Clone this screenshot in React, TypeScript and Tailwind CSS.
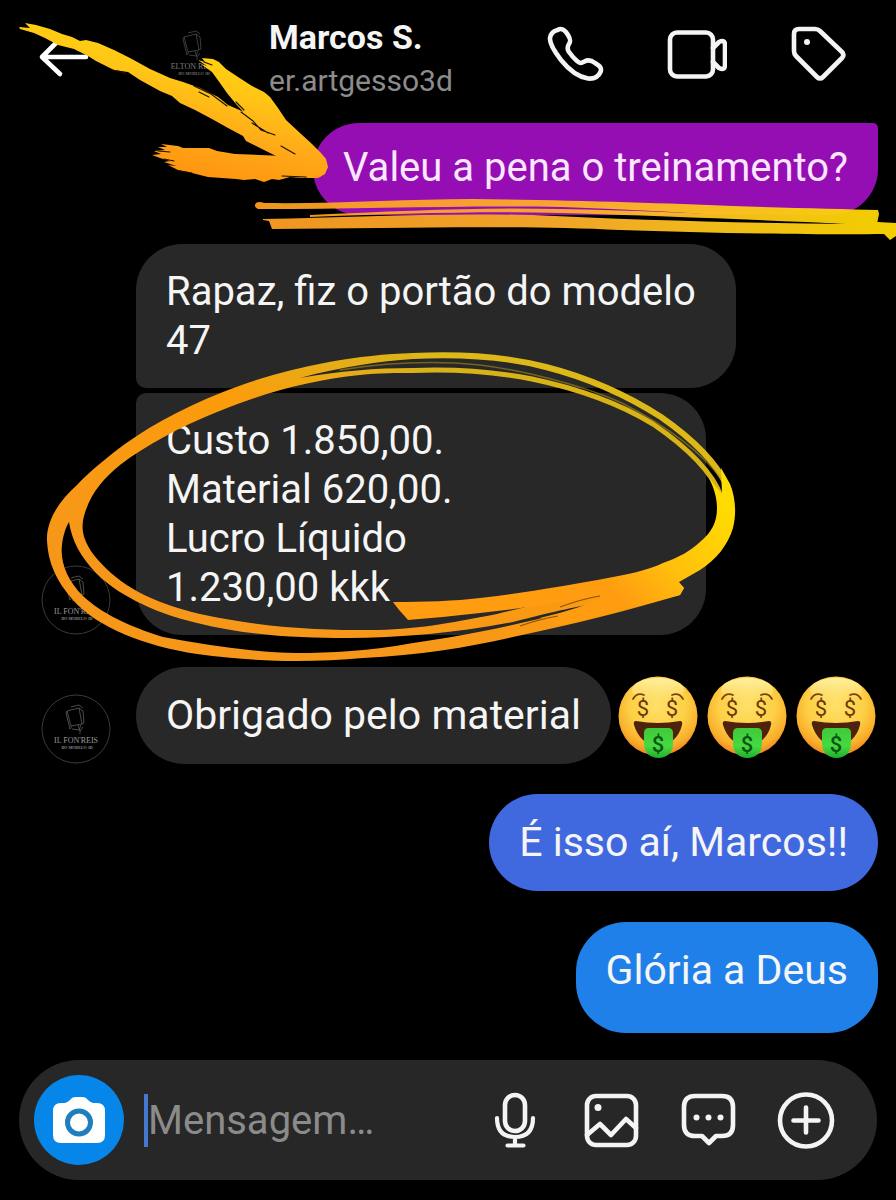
import { useId } from "react";
import type { ReactNode } from "react";

interface BrandMarkProps {
  title: string;
  subtitle: string;
  ring?: boolean;
}

function BrandMark({ title, subtitle, ring = false }: BrandMarkProps) {
  return (
    <svg viewBox="0 0 70 70" className="h-[70px] w-[70px] shrink-0" fill="none">
      {ring && <circle cx="35" cy="35" r="34" stroke="#3a3a3a" strokeWidth="1" />}
      <g stroke="#5e5e5e" strokeWidth="0.8" strokeLinejoin="round">
        <path d="M26 17l12-3 3 16-11 2zM26 17l-1 2 4 16 2-3M38 14l4 3 1 12-2 1M30 13l8-2 4 3" />
        <path d="M31 35l7 1 2-5M37 31l2 6 3-4M39 37v3" />
      </g>
      <text
        x="35"
        y="49"
        textAnchor="middle"
        fill="#9a9a9a"
        className="font-['Liberation_Serif',serif] text-[8px]"
      >
        {title}
      </text>
      <text
        x="36"
        y="55"
        textAnchor="middle"
        fill="#8a8a8a"
        className="font-['Liberation_Serif',serif] text-[4px] font-bold"
      >
        {subtitle}
      </text>
    </svg>
  );
}

function MoneyFace() {
  const id = useId();

  return (
    <svg viewBox="0 0 80 84" className="h-[84px] w-20 shrink-0" role="img" aria-label="money-mouth face">
      <defs>
        <radialGradient id={`${id}face`} cx="0.5" cy="0.36" r="0.66">
          <stop offset="0" stopColor="#ffe069" />
          <stop offset="0.55" stopColor="#fdcf44" />
          <stop offset="0.82" stopColor="#f9ae2b" />
          <stop offset="1" stopColor="#ee7d1e" />
        </radialGradient>
        <linearGradient id={`${id}shine`} x1="0" y1="0" x2="0" y2="1">
          <stop offset="0" stopColor="#fff3a8" stopOpacity="0.9" />
          <stop offset="1" stopColor="#fff3a8" stopOpacity="0" />
        </linearGradient>
        <linearGradient id={`${id}note`} x1="0" y1="0" x2="0" y2="1">
          <stop offset="0" stopColor="#3fc93a" />
          <stop offset="0.6" stopColor="#46da41" />
          <stop offset="1" stopColor="#1fae2b" />
        </linearGradient>
      </defs>
      <circle cx="40" cy="42" r="39.5" fill={`url(#${id}face)`} />
      <ellipse cx="40" cy="16" rx="26" ry="12" fill={`url(#${id}shine)`} />
      <g stroke="#7a4310" strokeWidth="1.8" strokeLinecap="round" fill="none">
        <path d="M15 25q4-7 11-4" />
        <path d="M54 21q7-3 11 4" />
      </g>
      <g fill="#6b380a" className="font-[Roboto,sans-serif] text-[22px]" textAnchor="middle">
        <text x="25" y="42">$</text>
        <text x="54" y="42">$</text>
      </g>
      <path d="M18 47q22 4 44 0q3 0 2 4c-3 13-12 20-24 20s-20-7-24-20q-1-4 2-4z" fill="#4f230b" />
      <path d="M26 63V59q0-5 5-5h19q5 0 5 5v11c0 9-7 14-14.500 14S26 79 26 70z" fill={`url(#${id}note)`} />
      <text
        x="40"
        y="78"
        textAnchor="middle"
        fill="#0d5417"
        className="font-[Roboto,sans-serif] text-[22px] font-medium"
      >
        $
      </text>
    </svg>
  );
}

interface BubbleProps {
  className: string;
  children: ReactNode;
}

function Bubble({ className, children }: BubbleProps) {
  return <p className={`px-[30px] leading-[49px] ${className}`}>{children}</p>;
}

function IconButton({ label, children }: { label: string; children: ReactNode }) {
  return (
    <button type="button" aria-label={label} className="shrink-0">
      <svg
        viewBox="0 0 60 60"
        className="h-[60px] w-[60px]"
        fill="none"
        stroke="#f4f4f4"
        strokeWidth="4.6"
        strokeLinecap="round"
        strokeLinejoin="round"
      >
        {children}
      </svg>
    </button>
  );
}

// Hand-drawn marker strokes on top of the conversation
function MarkerStrokes() {
  return (
    <svg
      viewBox="0 0 896 1200"
      preserveAspectRatio="xMinYMin meet"
      className="pointer-events-none absolute top-0 left-0 w-full"
      aria-hidden="true"
    >
      <defs>
        <linearGradient id="arrowInk" gradientUnits="userSpaceOnUse" x1="262" y1="50" x2="232" y2="180">
          <stop offset="0" stopColor="#ffd60a" />
          <stop offset="0.35" stopColor="#ffc616" />
          <stop offset="0.7" stopColor="#ffa918" />
          <stop offset="1" stopColor="#ff9710" />
        </linearGradient>
        <linearGradient id="lineInk" gradientUnits="userSpaceOnUse" x1="256" y1="0" x2="896" y2="0">
          <stop offset="0" stopColor="#fb9f22" />
          <stop offset="0.45" stopColor="#fdab2c" />
          <stop offset="0.75" stopColor="#fdc91a" />
          <stop offset="1" stopColor="#ffd900" />
        </linearGradient>
        <linearGradient id="loopInk" gradientUnits="userSpaceOnUse" x1="430" y1="352" x2="330" y2="640">
          <stop offset="0" stopColor="#d9b516" />
          <stop offset="0.15" stopColor="#e6ad16" />
          <stop offset="0.35" stopColor="#fb9c0c" />
          <stop offset="1" stopColor="#f7971a" />
        </linearGradient>
        <linearGradient id="tailInk" gradientUnits="userSpaceOnUse" x1="720" y1="500" x2="620" y2="600">
          <stop offset="0" stopColor="#ffdc00" />
          <stop offset="0.55" stopColor="#ffc10c" />
          <stop offset="1" stopColor="#ff9c10" />
        </linearGradient>
      </defs>

      <g fill="url(#arrowInk)">
        <path d="M19 27L30 28L25 23L36 25L50 29L62 34L72 37L80 41L86 40L98 43L114 50L130 58L150 69L170 78L183 82L200 88L218 97L228 105L244 112L258 124L272 134L283 141L300 156L290 176L276 156L262 149L246 141L243 136L228 128L212 119L195 110L180 103L172 96L160 91L140 80L128 72L114 70L96 61L88 56L74 49L58 45L45 38L34 33L20 29Z" />
        <path d="M198 60L205 62L202 58L213 59L219 62L226 69L238 77L252 86L264 92L270 97L278 108L286 120L300 133L312 144L321 153L326 159L328 167L325 174L318 178L308 178L290 165L276 147L262 130L248 117L236 104L227 93L220 83L212 72L205 67L201 64L207 66Z" />
        <path d="M152 155L161 154L154 151L165 150L158 147L167 147L161 144L178 146L183 148L209 148L217 151L235 154L260 155L284 156L306 148L324 160L326 171L320 177L302 178L290 177L279 180L272 179L264 182L255 179L244 180L236 179L222 178L208 177L196 174L188 172L178 170L168 165L176 166L164 162L170 161L160 158Z" />
      </g>
      <g stroke="#1a1200" strokeWidth="1.1" strokeLinecap="round" fill="none">
        <path d="M194 86l17 8 16 12M199 92l10 5M241 112l12 9 8 9 14 5M236 102l8 8M252 123l16 10M281 146l14 8M158 151l12 1M164 159l10 2M204 62l8 3M282 176l24 1M180 171l12 2M112 70l14 3M118 71l8 3" />
      </g>

      <g fill="url(#lineInk)" opacity="0.95">
        <path d="M256 203q3-2 8 0c76 1 140-4 208-4 90 1 190 4 260 7 60 2 110 3 146 4l1 4-2 10h-30c-80-6-190-14-285-17-90-2-200 2-304 2q-5-2-2-6z" />
        <path d="M310 215c90-4 170-8 250-6 100 2 200 7 290 11v4c-96-4-180-8-290-11-80-2-170 1-250 4z" />
        <path d="M263 219c90-2 170-6 270-4 100 5 210 8 318 9l8-3 37 2v13l-6 4-6-6c-60 1-180-1-264-4-100-5-220-2-348-1l-3-8-6-1z" />
      </g>

      <g fill="none" strokeLinecap="round">
        <path
          d="M727 486C716 462 694 440 661 417C622 392 585 377 546 367C500 355 455 354 413 356"
          stroke="#dcb818"
          strokeWidth="6"
        />
        <path
          d="M721 496C712 472 688 448 653 424C620 404 580 389 532 379C490 371 450 369 413 370.500"
          stroke="#d8b318"
          strokeWidth="5"
        />
        <path
          d="M722 480C702 452 670 428 622 403C580 384 520 370 480 365C440 361 390 362 340 370"
          stroke="#a98a12"
          strokeWidth="1.5"
          opacity="0.6"
        />
      </g>
      <path
        fill="url(#loopInk)"
        d="M413 353C345 355 275 371 223 392C180 409 142 430 113 453C98 465 86 475 77 485C60 500 46 520 47 541C48 562 56 581 73 600C98 628 145 646 197 654C262 663 315 662 363 658C420 655 470 647 513 637C575 624 630 610 680 595L684 588L674 578C620 588 560 598 497 614C450 623 415 630 370 630C320 630 265 628 200 614C150 602 120 585 98 560C84 544 80 530 84 516C90 494 103 479 120 465C146 445 180 427 217 412C260 394 310 380 360 375C380 373 396 373 413 373L413 368C375 368 340 371 300 378C340 367 380 361 413 359zM69 522C72 541 80 556 97 574C115 592 150 612 197 623C250 636 300 638 347 638C400 638 455 633 513 622C555 611 580 606 602 602C550 617 490 632 413 643C370 651 330 653 297 653C250 652 205 645 163 637C125 625 100 612 83 596C67 580 60 562 62 545C63 535 66 527 69 522z"
        fillRule="evenodd"
      />
      <path
        fill="url(#tailInk)"
        d="M393 602C425 602 455 601 480 598C530 592 570 585 613 577C635 573 650 569 663 563C680 557 690 551 700 542C712 532 717 522 717 508C717 498 714 488 709 478L722 494L721 468L730 484C735 496 737 512 733 528C728 545 716 560 700 570L679 582L684 588L680 595C640 606 600 616 560 625L540 618C570 611 590 604 602 596C560 602 520 609 480 613C455 616 430 618 408 620C402 613 397 608 393 602z"
      />
      <path d="M560 607q22-8 40-11M520 626q20-7 38-10" stroke="#8a5208" strokeWidth="1.2" fill="none" />
    </svg>
  );
}

export default function App() {
  return (
    <div className="relative flex min-h-screen flex-col overflow-hidden bg-black font-[Roboto,sans-serif] text-[#f5f5f5]">
      <header className="flex h-[123px] items-start pr-[47px] pl-8">
        <button type="button" aria-label="Voltar" className="mt-[26px] shrink-0">
          <svg
            viewBox="0 0 60 60"
            className="h-[60px] w-[60px]"
            fill="none"
            stroke="#fff"
            strokeWidth="4.6"
            strokeLinecap="round"
            strokeLinejoin="round"
          >
            <path d="M28 13L10 31l18 17M10 31h44" />
          </svg>
        </button>
        <div className="mt-5 ml-[66px] shrink-0 opacity-80">
          <BrandMark title="ELTON REIS" subtitle="DO MODELO 3D" />
        </div>
        <div className="ml-[41px] min-w-0 flex-1 pt-4">
          <h1 className="text-[34px] leading-[43px] font-bold">Marcos S.</h1>
          <p className="text-[30px] leading-[43px] text-[#8c8c8c]">er.artgesso3d</p>
        </div>
        <div className="mt-6 flex gap-[62px]">
          <IconButton label="Ligar">
            <path d="M12.5 6C17 3.500 20 6 23 11C25.500 15 26 17 24 20C22 23 22 25 24 28C26.500 31.500 28.500 34 32 37C35 39.500 36 39.500 39.500 37.500C43 35.500 46 36 50 39C55 42 57 44 55.500 48C53.500 52.500 49 55 43 54.500C34 53 24 46 16 36C9 27 4.500 19 5 14C5.500 10 8.500 7 12.500 6Z" />
          </IconButton>
          <IconButton label="Chamada de vídeo">
            <rect x="3" y="8.500" width="43" height="44" rx="7" />
            <path d="M46 24l6-6q6-3 6 3v20q0 6-6 3l-6-6" />
          </IconButton>
          <IconButton label="Etiqueta">
            <path d="M10 5h16q3 0 5 2l22 21q3 3 0 6L34 53q-3 3-6 0L7 32q-2-2-2-5V10q0-5 5-5z" />
            <circle cx="18" cy="18" r="3" fill="#f4f4f4" stroke="none" />
          </IconButton>
        </div>
      </header>

      <main className="flex flex-col pr-[18px] pl-[41px]">
        <Bubble className="self-end rounded-tl-[46px] rounded-tr-[5px] rounded-b-[46px] bg-[#950eb3] pt-5 pb-[23px] text-[40px] text-[#fde6ff]">
          Valeu a pena o treinamento?
        </Bubble>

        <Bubble className="mt-[29px] ml-[95px] max-w-[600px] self-start rounded-t-[46px] rounded-br-[46px] rounded-bl-[10px] bg-[#282828] py-[23px] text-[40px]">
          Rapaz, fiz o portão do modelo 47
        </Bubble>

        <div className="mt-[5px] flex items-end gap-[25px]">
          <BrandMark ring title="IL FON'REIS" subtitle="DO MODELO 3D" />
          <Bubble className="w-full max-w-[570px] rounded-tl-[10px] rounded-tr-[46px] rounded-b-[46px] bg-[#282828] py-[23px] text-[40px]">
            Custo 1.850,00.
            <br />
            Material 620,00.
            <br />
            Lucro Líquido
            <br />
            1.230,00 kkk
          </Bubble>
        </div>

        <div className="mt-8 flex items-end gap-[25px]">
          <BrandMark ring title="IL FON'REIS" subtitle="DO MODELO 3D" />
          <div className="flex items-center">
            <Bubble className="rounded-full bg-[#282828] py-6 text-[41px]">Obrigado pelo material</Bubble>
            <div className="ml-[7px] flex gap-[9px]">
              <MoneyFace />
              <MoneyFace />
              <MoneyFace />
            </div>
          </div>
        </div>

        <Bubble className="mt-[30px] self-end rounded-full bg-[#4069df] py-6 text-[41px]">É isso aí, Marcos!!</Bubble>

        <Bubble className="mt-[31px] self-end rounded-[50px] bg-[#1f80e9] pt-6 pb-[38px] text-[41px]">
          Glória a Deus
        </Bubble>
      </main>

      <form
        className="mx-[19px] mt-[27px] flex h-[120px] items-center rounded-full bg-[#272727] pr-[41px] pl-[15px]"
        onSubmit={(e) => e.preventDefault()}
      >
        <button
          type="button"
          aria-label="Câmera"
          className="flex h-[90px] w-[90px] shrink-0 items-center justify-center rounded-full bg-[#0786ea]"
        >
          <svg viewBox="0 0 54 50" className="h-[50px] w-[54px]" fill="#fff">
            <path d="M9 8h4q3-1 5-3 2-3 5-3h8q3 0 5 3 2 2 5 3h4q8 0 8 8v24q0 8-8 8H9q-8 0-8-8V16q0-8 8-8z" />
            <circle cx="27" cy="27.500" r="11.500" fill="none" stroke="#1f7fbd" strokeWidth="5" />
          </svg>
        </button>
        <span className="ml-5 h-[53px] w-1 shrink-0 bg-[#4678d2]" />
        <input
          type="text"
          aria-label="Mensagem"
          placeholder="Mensagem…"
          className="min-w-0 flex-1 bg-transparent text-[40px] leading-[49px] outline-none placeholder:text-[#8b8b8b]"
        />
        <div className="flex gap-[37px]">
          <IconButton label="Gravar áudio">
            <rect x="20" y="5" width="20" height="36" rx="10" />
            <path d="M12 28q0 19 18 19t18-19M30 47v8M22.500 55.500h16" strokeWidth="4.200" />
          </IconButton>
          <IconButton label="Galeria">
            <rect x="5" y="6" width="49" height="49" rx="9" />
            <path d="M5 45l13-11 11 11L44 29l10 9" />
            <circle cx="16" cy="17.500" r="3.500" fill="#f4f4f4" stroke="none" />
          </IconButton>
          <IconButton label="Respostas rápidas">
            <path d="M16 6h27q11 0 11 11v18q0 11-11 11h-6l-7 7-7-7h-7q-11 0-11-11V17q0-11 11-11z" />
            <g fill="#f4f4f4" stroke="none">
              <circle cx="17.500" cy="27.500" r="3" />
              <circle cx="29.500" cy="27.500" r="3" />
              <circle cx="41.500" cy="27.500" r="3" />
            </g>
          </IconButton>
          <IconButton label="Mais opções">
            <circle cx="30" cy="30.500" r="26" />
            <path d="M30 17.500v25M17.500 30.500h25" />
          </IconButton>
        </div>
      </form>

      <MarkerStrokes />
    </div>
  );
}
